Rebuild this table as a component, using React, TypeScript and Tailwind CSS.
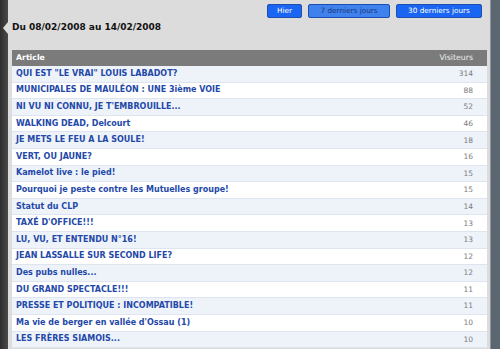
const rows: [string, number][] = [
  ['QUI EST "LE VRAI" LOUIS LABADOT?', 314],
  ['MUNICIPALES DE MAULÉON : UNE 3ième VOIE', 88],
  ["NI VU NI CONNU, JE T'EMBROUILLE...", 52],
  ['WALKING DEAD, Delcourt', 46],
  ['JE METS LE FEU A LA SOULE!', 18],
  ['VERT, OU JAUNE?', 16],
  ['Kamelot live : le pied!', 15],
  ['Pourquoi je peste contre les Mutuelles groupe!', 15],
  ['Statut du CLP', 14],
  ["TAXÉ D'OFFICE!!!", 13],
  ['LU, VU, ET ENTENDU N°16!', 13],
  ['JEAN LASSALLE SUR SECOND LIFE?', 12],
  ['Des pubs nulles...', 12],
  ['DU GRAND SPECTACLE!!!', 11],
  ['PRESSE ET POLITIQUE : INCOMPATIBLE!', 11],
  ["Ma vie de berger en vallée d'Ossau (1)", 10],
  ['LES FRÈRES SIAMOIS...', 10],
];

function App() {
  return (
    <div className="flex h-[349px] w-[500px] overflow-hidden font-['DejaVu_Sans',sans-serif]">
      {/* bande sombre à gauche, avec la flèche de la bulle */}
      <div className="relative w-[8px] bg-gradient-to-r from-[#2e2e2e] to-[#4a4a4a]">
        <div className="absolute left-[3px] top-[22px] h-0 w-0 border-y-[6px] border-r-[5px] border-y-transparent border-r-[#dcdcdc]" />
      </div>

      {/* panneau principal */}
      <div className="flex w-[482px] flex-col bg-[#dcdcdc] pl-[4px] pr-[3px]">
        {/* boutons de période */}
        <div className="flex h-[18px] items-start justify-end gap-[6px] pr-[5px] pt-[4px]">
          <button className="h-[14px] w-[35px] rounded-[2px] border border-[#1d4fb0] bg-[#1a66f2] text-[7.3px] leading-[12px] text-white">
            Hier
          </button>
          <button className="h-[14px] w-[82px] rounded-[2px] border border-[#1d4fb0] bg-[#3f82ee] text-[7.3px] leading-[12px] text-[#1c3778]">
            7 derniers jours
          </button>
          <button className="h-[14px] w-[86px] rounded-[2px] border border-[#1d4fb0] bg-[#1a66f2] text-[7.3px] leading-[12px] text-white">
            30 derniers jours
          </button>
        </div>

        <h1 className="mb-[16px] mt-[2px] h-[14px] text-[9px] font-bold leading-[14px] text-[#111]">
          Du 08/02/2008 au 14/02/2008
        </h1>

        {/* tableau des articles */}
        <div className="flex flex-col">
          <div className="flex h-[16px] items-center justify-between bg-[#7b7b7b] px-[4px] text-[7.8px]">
            <span className="font-bold text-white">Article</span>
            <span className="pr-[10px] text-[#eeeeee]">Visiteurs</span>
          </div>
          {rows.map(([title, count], i) => (
            <div
              key={i}
              className={
                'flex h-[16.6px] shrink-0 items-center justify-between border-b border-[#dfe5ee] px-[4px] text-[8px] ' +
                (i % 2 === 0 ? 'bg-[#eef3fa]' : 'bg-white')
              }
            >
              <span className="font-bold text-[#2348a8]">{title}</span>
              <span className="pr-[10px] text-[7.5px] text-[#7a7a7a]">{count}</span>
            </div>
          ))}
        </div>
      </div>

      {/* bande à droite */}
      <div className="w-[10px] border-l border-[#8a949c] bg-[#5b6670]" />
    </div>
  );
}

export default App;
